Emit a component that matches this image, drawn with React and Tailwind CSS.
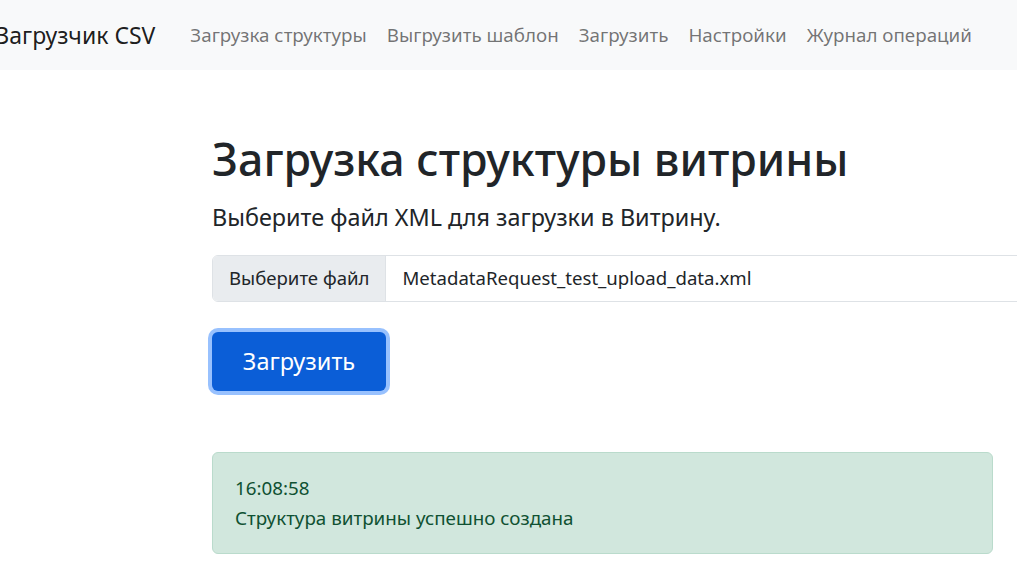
export default function App() {
  return (
    <div className="min-h-screen w-full overflow-hidden bg-white font-['Noto_Sans',sans-serif]">
      <nav className="flex h-[70px] items-center bg-[#f8f9fa]">
        <a className="-ml-[4px] mr-[35px] whitespace-nowrap text-[23px] text-[rgba(0,0,0,0.9)]">Загрузчик CSV</a>
        <div className="flex gap-[20px] whitespace-nowrap text-[18.8px] text-[rgba(0,0,0,0.55)]">
          <a>Загрузка структуры</a>
          <a>Выгрузить шаблон</a>
          <a>Загрузить</a>
          <a>Настройки</a>
          <a>Журнал операций</a>
        </div>
      </nav>
      <main className="pl-[212px] pt-[62px]">
        <h1 className="text-[44.7px] font-medium leading-[1.2] text-[#212529] whitespace-nowrap">Загрузка структуры витрины</h1>
        <p className="mt-[14px] text-[23.4px] leading-[1.5] text-[#212529]">Выберите файл XML для загрузки в Витрину.</p>
        <div className="mt-[20px] flex h-[47px] w-[900px] overflow-hidden rounded-l-[6px] border border-[#dee2e6] text-[18.6px] text-[#212529]">
          <div className="flex items-center border-r border-[#dee2e6] bg-[#e9ecef] px-[16px]">Выберите файл</div>
          <div className="flex items-center px-[16px]">MetadataRequest_test_upload_data.xml</div>
        </div>
        <button className="mt-[30px] block h-[59px] w-[174px] rounded-[6px] bg-[#0b5ed7] text-[23.5px] text-white shadow-[0_0_0_4px_rgba(49,132,253,0.5)]">Загрузить</button>
        <div className="mt-[61px] flex h-[102px] w-[781px] flex-col justify-center rounded-[6px] border border-[#badbcc] bg-[#d1e7dd] px-[22px] text-[18.8px] leading-[30px] text-[#0f5132]">
          <div>16:08:58</div>
          <div>Структура витрины успешно создана</div>
        </div>
      </main>
    </div>
  );
}
